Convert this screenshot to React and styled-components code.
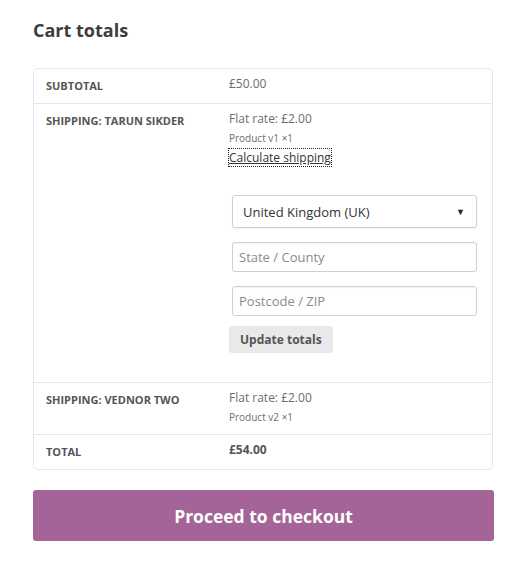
import React from "react";
import styled, { createGlobalStyle } from "styled-components";

const GlobalStyle = createGlobalStyle`
  html, body {
    margin: 0;
    padding: 0;
    background: #ffffff;
  }
  body {
    font-family: "Open Sans", "Liberation Sans", sans-serif;
    color: #6d6d6d;
    -webkit-font-smoothing: antialiased;
  }
`;

const Wrapper = styled.div`
  width: 461px;
  margin-left: 33px;
  padding-top: 18px;
`;

const Title = styled.h2`
  margin: 0 0 26px;
  font-size: 18px;
  line-height: 24px;
  font-weight: 700;
  color: #3d3d3d;
`;

const Totals = styled.div`
  width: 460px;
  box-sizing: border-box;
  border: 1px solid #e6e6e6;
  border-radius: 5px;
`;

const Row = styled.div`
  display: grid;
  grid-template-columns: 195px 1fr;
  & + & {
    border-top: 1px solid #e6e6e6;
  }
`;

const Label = styled.div`
  padding: 9px 12px 9px 12px;
  font-size: 11px;
  line-height: 16px;
  font-weight: 700;
  text-transform: uppercase;
  color: #555555;
`;

const Value = styled.div`
  padding: 6px 15px 9px 0;
  font-size: 12px;
  line-height: 18px;
  font-weight: ${(p) => (p.$strong ? 700 : 400)};
  color: ${(p) => (p.$strong ? "#555555" : "#6d6d6d")};
`;

const Note = styled.div`
  margin-top: 2px;
  font-size: 10px;
  line-height: 16px;
  color: #6d6d6d;
`;

const CalcLine = styled.div`
  margin-top: 3px;
  line-height: 18px;
`;

const CalcLink = styled.a`
  color: #333333;
  text-decoration: underline;
  outline: 1px dotted #222222;
  cursor: pointer;
`;

const Form = styled.form`
  margin: 28px 0 20px;
  display: flex;
  flex-direction: column;
  align-items: flex-start;
`;

const Field = styled.div`
  width: 100%;
  box-sizing: border-box;
  padding: 0 0 0 3px;
  margin-bottom: ${(p) => p.$gap}px;
`;

const SelectBox = styled.div`
  position: relative;
  box-sizing: border-box;
  height: 33px;
  border: 1px solid #cfcfcf;
  border-radius: 3px;
  display: flex;
  align-items: center;
  padding: 0 10px;
  font-size: 13px;
  color: #333333;
  box-shadow: 0 1px 2px rgba(0, 0, 0, 0.06);
`;

const SelectText = styled.span`
  flex: 1;
`;

const Caret = styled.span`
  font-size: 9px;
  color: #222222;
  margin-right: 1px;
`;

const TextInput = styled.input`
  display: block;
  width: 100%;
  box-sizing: border-box;
  height: 30px;
  border: 1px solid #cfcfcf;
  border-radius: 3px;
  padding: 0 6px;
  font-family: "Open Sans", "Liberation Sans", sans-serif;
  font-size: 13px;
  color: #333333;
  background: #ffffff;
  box-shadow: inset 0 1px 1px rgba(0, 0, 0, 0.04);
  &::placeholder {
    color: #8a8a8a;
  }
`;

const UpdateButton = styled.button`
  height: 27px;
  padding: 0 11px;
  border: none;
  border-radius: 3px;
  background: #e9e8ea;
  font-family: "Open Sans", "Liberation Sans", sans-serif;
  font-size: 12px;
  font-weight: 700;
  color: #555555;
  cursor: pointer;
`;

const CheckoutButton = styled.a`
  display: flex;
  align-items: center;
  justify-content: center;
  margin-top: 20px;
  height: 51px;
  width: 461px;
  border-radius: 3px;
  background: #a46497;
  color: #ffffff;
  font-size: 17.5px;
  font-weight: 700;
  text-decoration: none;
`;

const rows = [
  { label: "Subtotal", value: "£50.00" },
  { label: "Shipping: Tarun Sikder", value: "Flat rate: £2.00", note: "Product v1 ×1", calc: true },
  { label: "Shipping: Vednor Two", value: "Flat rate: £2.00", note: "Product v2 ×1" },
  { label: "Total", value: "£54.00", strong: true },
];

export default function App() {
  return (
    <>
      <GlobalStyle />
      <Wrapper>
        <Title>Cart totals</Title>
        <Totals>
          {rows.map((r) => (
            <Row key={r.label}>
              <Label>{r.label}</Label>
              <Value $strong={r.strong}>
                {r.value}
                {r.note && <Note>{r.note}</Note>}
                {r.calc && (
                  <>
                    <CalcLine>
                      <CalcLink>Calculate shipping</CalcLink>
                    </CalcLine>
                    <Form onSubmit={(e) => e.preventDefault()}>
                      <Field $gap={14}>
                        <SelectBox>
                          <SelectText>United Kingdom (UK)</SelectText>
                          <Caret>▼</Caret>
                        </SelectBox>
                      </Field>
                      <Field $gap={14}>
                        <TextInput placeholder="State / County" />
                      </Field>
                      <Field $gap={10}>
                        <TextInput placeholder="Postcode / ZIP" />
                      </Field>
                      <UpdateButton type="button">Update totals</UpdateButton>
                    </Form>
                  </>
                )}
              </Value>
            </Row>
          ))}
        </Totals>
        <CheckoutButton>Proceed to checkout</CheckoutButton>
      </Wrapper>
    </>
  );
}
